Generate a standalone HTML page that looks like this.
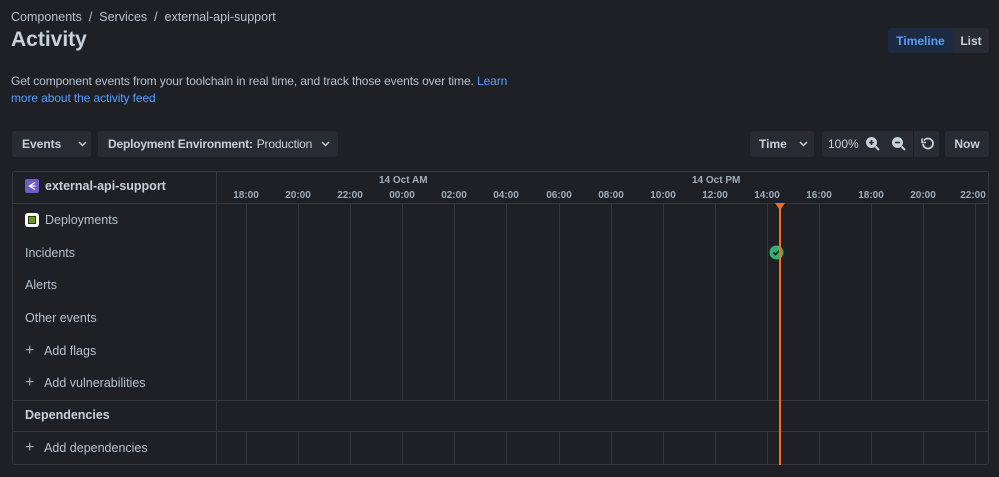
<!DOCTYPE html>
<html><head><meta charset="utf-8"><style>
*{box-sizing:border-box;margin:0;padding:0}
body{width:999px;height:477px;background:#1e2025;font-family:"Liberation Sans",sans-serif;color:#c7d1db;position:relative;overflow:hidden}
.a{position:absolute;white-space:nowrap}
.btn{position:absolute;background:#282b31;border-radius:3px;font-size:12px;font-weight:bold;color:#c7d1db;display:flex;align-items:center;white-space:nowrap}
.lbl{position:absolute;font-size:12.5px;color:#b6c2cf;left:25px;white-space:nowrap}
.vl{position:absolute;width:1px;background:#33363c}
.hl{position:absolute;height:1px;background:#35383e;left:12px;width:977px}
.t{position:absolute;top:190px;font-size:10px;font-weight:bold;color:#9fadbc;width:40px;text-align:center;margin-left:-20px}
</style></head><body>
<div class="a" style="left:11px;top:10px;font-size:12.5px;color:#b6c2cf">Components &nbsp;/&nbsp; Services &nbsp;/&nbsp; external-api-support</div>
<div class="a" style="left:11px;top:28px;font-size:21px;font-weight:bold;color:#c7d1db">Activity</div>
<div class="btn" style="left:888px;top:28px;width:101px;height:25px;padding:0"><div style="background:#1c2b41;color:#579dff;height:100%;width:65px;display:flex;align-items:center;justify-content:center;border-radius:3px 0 0 3px">Timeline</div><div style="flex:1;text-align:center">List</div></div>
<div class="a" style="left:11px;top:73px;font-size:12px;line-height:17px;color:#b6c2cf;width:500px;white-space:normal;letter-spacing:-0.1px">Get component events from your toolchain in real time, and track those events over time. <span style="color:#579dff">Learn more about the activity feed</span></div>
<div class="btn" style="left:12px;top:131px;width:79px;height:26px;padding-left:10px">Events<svg style="margin-left:17px" width="9" height="6"><path d="M1 1l3.5 3.5L8 1" stroke="#c7d1db" stroke-width="1.5" fill="none"/></svg></div>
<div class="btn" style="left:98px;top:131px;width:240px;height:26px;padding-left:10px;letter-spacing:-0.2px">Deployment Environment:<span style="font-weight:normal;margin-left:4px">Production</span><svg style="margin-left:9px" width="9" height="6"><path d="M1 1l3.5 3.5L8 1" stroke="#c7d1db" stroke-width="1.5" fill="none"/></svg></div>
<div class="btn" style="left:750px;top:131px;width:64px;height:26px;padding-left:9px">Time<svg style="margin-left:12px" width="9" height="6"><path d="M1 1l3.5 3.5L8 1" stroke="#c7d1db" stroke-width="1.5" fill="none"/></svg></div>
<div class="btn" style="left:822px;top:131px;width:117px;height:26px;padding-left:6px;font-weight:normal">100%
<svg style="margin-left:6px" width="16" height="16" viewBox="0 0 16 16"><circle cx="6.5" cy="6.5" r="5.5" fill="#c7d1db"/><path d="M10.5 10.5L14 14" stroke="#c7d1db" stroke-width="2"/><path d="M4 6.5h5M6.5 4v5" stroke="#282b31" stroke-width="1.6"/></svg>
<svg style="margin-left:10px" width="16" height="16" viewBox="0 0 16 16"><circle cx="6.5" cy="6.5" r="5.5" fill="#c7d1db"/><path d="M10.5 10.5L14 14" stroke="#c7d1db" stroke-width="2"/><path d="M4 6.5h5" stroke="#282b31" stroke-width="1.6"/></svg>
<div style="width:1px;height:26px;background:#1e2025;margin-left:6px"></div>
<svg style="margin-left:7px" width="14" height="14" viewBox="0 0 14 14"><path d="M3 3.5A5 5 0 1 1 2 7" stroke="#c7d1db" stroke-width="1.8" fill="none"/><path d="M1 1.5v4h4" stroke="#c7d1db" stroke-width="1.6" fill="none"/></svg></div>
<div class="btn" style="left:945px;top:131px;width:44px;height:26px;justify-content:center">Now</div>

<div class="a" style="left:12px;top:171px;width:977px;height:294px;border:1px solid #35383e;border-radius:3px"></div>
<div class="vl" style="left:216px;top:171px;height:293px;background:#35383e"></div>
<div class="hl" style="top:203px"></div>
<div class="hl" style="top:400px"></div>
<div class="hl" style="top:431px"></div>

<div class="a" style="left:25px;top:179px;width:14px;height:14px;background:#6e5dc6;border-radius:2px"><svg width="14" height="14"><path d="M10 3.5L4.5 7L10 10.5M4.5 7h6" stroke="#fff" stroke-width="1.3" fill="none"/></svg></div>
<div class="a" style="left:45px;top:179px;font-size:12.5px;font-weight:bold;color:#c7d1db">external-api-support</div>
<div class="a" style="left:25px;top:213px;width:14px;height:14px;background:#fff;border-radius:3px"><div style="margin:3px;width:8px;height:8px;background:#6a9a23;border:1.5px solid #2c3e10"></div></div>
<div class="lbl" style="left:45px;top:213px">Deployments</div>
<div class="lbl" style="top:246px">Incidents</div>
<div class="lbl" style="top:278px">Alerts</div>
<div class="lbl" style="top:311px">Other events</div>
<div class="lbl" style="top:344px"><span style="font-size:16px;color:#9fadbc;line-height:12px">+</span>&nbsp;&nbsp; Add flags</div>
<div class="lbl" style="top:376px"><span style="font-size:16px;color:#9fadbc;line-height:12px">+</span>&nbsp;&nbsp; Add vulnerabilities</div>
<div class="lbl" style="top:408px;font-weight:bold;color:#c7d1db">Dependencies</div>
<div class="lbl" style="top:441px"><span style="font-size:16px;color:#9fadbc;line-height:12px">+</span>&nbsp;&nbsp; Add dependencies</div>

<div class="a" style="left:379px;top:175px;font-size:10px;font-weight:bold;color:#9fadbc">14 Oct AM</div>
<div class="a" style="left:692px;top:175px;font-size:10px;font-weight:bold;color:#9fadbc">14 Oct PM</div>
<div class="t" style="left:246px">18:00</div><div class="t" style="left:298px">20:00</div><div class="t" style="left:350px">22:00</div><div class="t" style="left:402px">00:00</div><div class="t" style="left:454px">02:00</div><div class="t" style="left:506px">04:00</div><div class="t" style="left:559px">06:00</div><div class="t" style="left:611px">08:00</div><div class="t" style="left:663px">10:00</div><div class="t" style="left:715px">12:00</div><div class="t" style="left:767px">14:00</div><div class="t" style="left:819px">16:00</div><div class="t" style="left:871px">18:00</div><div class="t" style="left:923px">20:00</div><div class="t" style="left:973px">22:00</div>

<div class="vl" style="left:246px;top:204px;height:196px"></div><div class="vl" style="left:298px;top:204px;height:196px"></div><div class="vl" style="left:350px;top:204px;height:196px"></div><div class="vl" style="left:402px;top:204px;height:196px"></div><div class="vl" style="left:454px;top:204px;height:196px"></div><div class="vl" style="left:506px;top:204px;height:196px"></div><div class="vl" style="left:559px;top:204px;height:196px"></div><div class="vl" style="left:611px;top:204px;height:196px"></div><div class="vl" style="left:663px;top:204px;height:196px"></div><div class="vl" style="left:715px;top:204px;height:196px"></div><div class="vl" style="left:767px;top:204px;height:196px"></div><div class="vl" style="left:819px;top:204px;height:196px"></div><div class="vl" style="left:871px;top:204px;height:196px"></div><div class="vl" style="left:923px;top:204px;height:196px"></div><div class="vl" style="left:975px;top:204px;height:196px"></div>
<div class="vl" style="left:246px;top:432px;height:32px"></div><div class="vl" style="left:298px;top:432px;height:32px"></div><div class="vl" style="left:350px;top:432px;height:32px"></div><div class="vl" style="left:402px;top:432px;height:32px"></div><div class="vl" style="left:454px;top:432px;height:32px"></div><div class="vl" style="left:506px;top:432px;height:32px"></div><div class="vl" style="left:559px;top:432px;height:32px"></div><div class="vl" style="left:611px;top:432px;height:32px"></div><div class="vl" style="left:663px;top:432px;height:32px"></div><div class="vl" style="left:715px;top:432px;height:32px"></div><div class="vl" style="left:767px;top:432px;height:32px"></div><div class="vl" style="left:819px;top:432px;height:32px"></div><div class="vl" style="left:871px;top:432px;height:32px"></div><div class="vl" style="left:923px;top:432px;height:32px"></div><div class="vl" style="left:975px;top:432px;height:32px"></div>

<svg class="a" style="left:769px;top:245px" width="15" height="15"><circle cx="7.5" cy="7.5" r="7" fill="#2fb270"/><path d="M4.5 7.5l2 2 4-4" stroke="#1e2025" stroke-width="1.8" fill="none"/></svg>
<div class="a" style="left:779px;top:204px;width:2px;height:261px;background:#f76d1c"></div>
<svg class="a" style="left:775px;top:203px" width="10" height="7"><path d="M0 0h10L5 7z" fill="#f76d1c"/></svg>
</body></html>
